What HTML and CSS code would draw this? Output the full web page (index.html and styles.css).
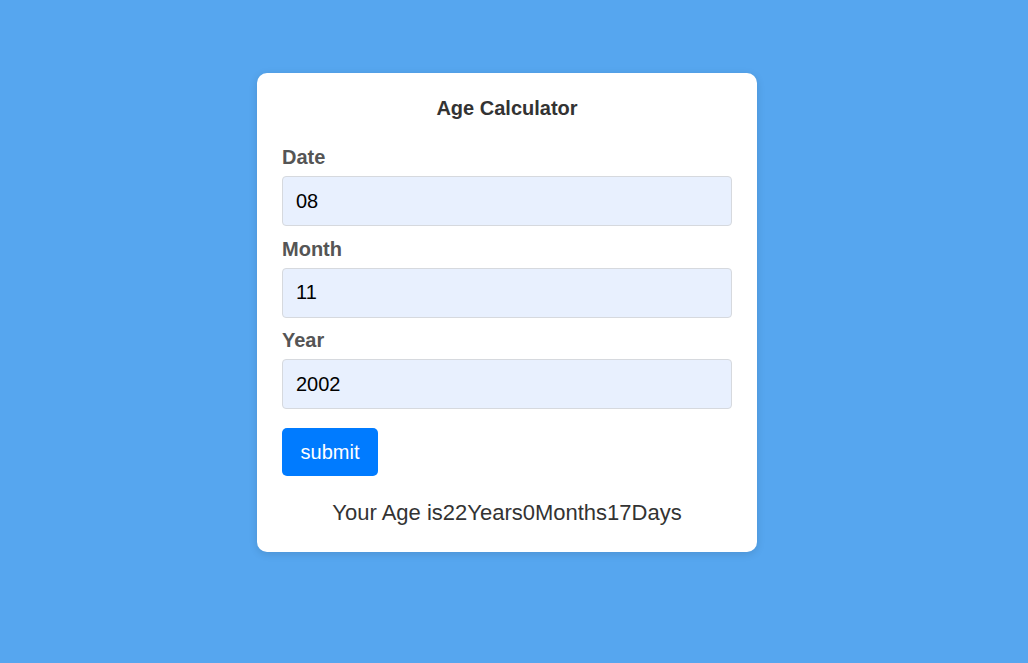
FILE: index.html
```html
<!DOCTYPE html>
<html>
<head>
<meta charset="utf-8">
<link rel="stylesheet" href="styles.css">
</head>
<body>
<div class="page">
  <div class="card">
    <h2 class="title">Age Calculator</h2>
    <form class="form">
      <div class="field">
        <label class="label">Date</label>
        <input class="input" type="text" value="08">
      </div>
      <div class="field">
        <label class="label">Month</label>
        <input class="input" type="text" value="11">
      </div>
      <div class="field">
        <label class="label">Year</label>
        <input class="input" type="text" value="2002">
      </div>
      <button class="btn" type="button">submit</button>
    </form>
    <p class="result">Your Age is22Years0Months17Days</p>
  </div>
</div>
</body>
</html>
```
FILE: styles.css
```css
* { box-sizing: border-box; }
html, body { margin: 0; padding: 0; }
body {
  background: #56a6ef;
  font-family: "Liberation Sans", Arial, sans-serif;
  height: 663px;
}
.page {
  display: flex;
  justify-content: center;
  padding: 73px 14px 0 0;
}
.card {
  width: 500px;
  background: #fff;
  border-radius: 10px;
  box-shadow: 0 2px 8px rgba(0,0,0,0.12);
  padding: 23px 25px 26px;
}
.title {
  margin: 0 0 25px;
  font-size: 20px;
  line-height: 24px;
  font-weight: bold;
  color: #333;
  text-align: center;
}
.form { display: flex; flex-direction: column; }
.field { display: flex; flex-direction: column; margin-bottom: 10.5px; }
.label {
  font-size: 20px;
  line-height: 24px;
  font-weight: bold;
  color: #555;
  margin-bottom: 7px;
}
.input {
  width: 450px;
  height: 50px;
  border: 1px solid #d6d9de;
  border-radius: 4px;
  background: #e8f0fe;
  padding: 0 13px;
  font-family: "Liberation Sans", Arial, sans-serif;
  font-size: 20px;
  color: #000;
  outline: none;
}
.btn {
  align-self: flex-start;
  margin-top: 8.5px;
  width: 96px;
  height: 48px;
  border: none;
  border-radius: 5px;
  background: #007bff;
  color: #fff;
  font-family: "Liberation Sans", Arial, sans-serif;
  font-size: 20px;
  padding: 0;
}
.result {
  margin: 24px 0 0;
  font-size: 22px;
  line-height: 26px;
  color: #333;
  text-align: center;
}
```
